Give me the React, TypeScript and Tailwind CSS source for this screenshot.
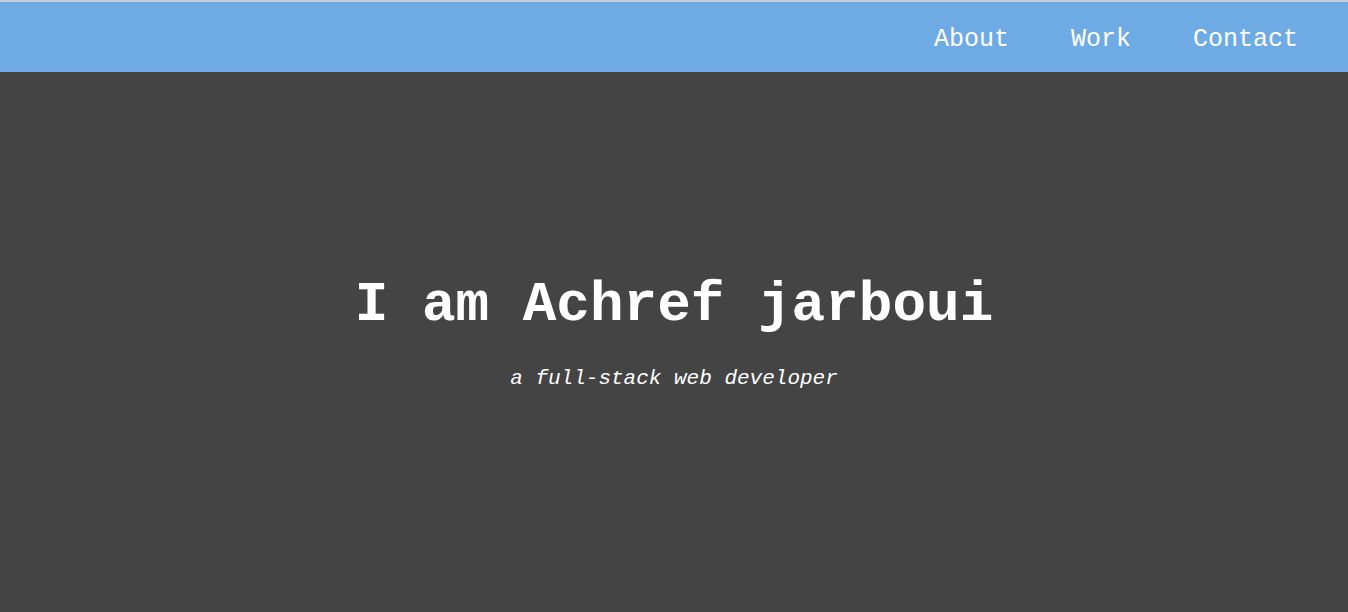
import React from 'react'

const App = () => {
  return (
    <div className="w-full h-[612px] flex flex-col bg-[#444444] font-['Liberation_Mono','Courier_New',monospace]">
      {/* Nav */}
      <div className="h-[72px] border-t-2 border-[#c4ced8] bg-[#6eabe5] flex items-center justify-end pr-[50px] pt-[5px]">
        <a className="text-[25px] text-white ml-[62px]">About</a>
        <a className="text-[25px] text-white ml-[62px]">Work</a>
        <a className="text-[25px] text-white ml-[62px]">Contact</a>
      </div>

      {/* Hero */}
      <div className="flex-1 flex flex-col items-center justify-center pb-[16px]">
        <h1 className="text-[56px] leading-[64px] font-bold text-white">I am Achref jarboui</h1>
        <p className="text-[21px] italic text-white mt-[26px]">a full-stack web developer</p>
      </div>
    </div>
  )
}

export default App
